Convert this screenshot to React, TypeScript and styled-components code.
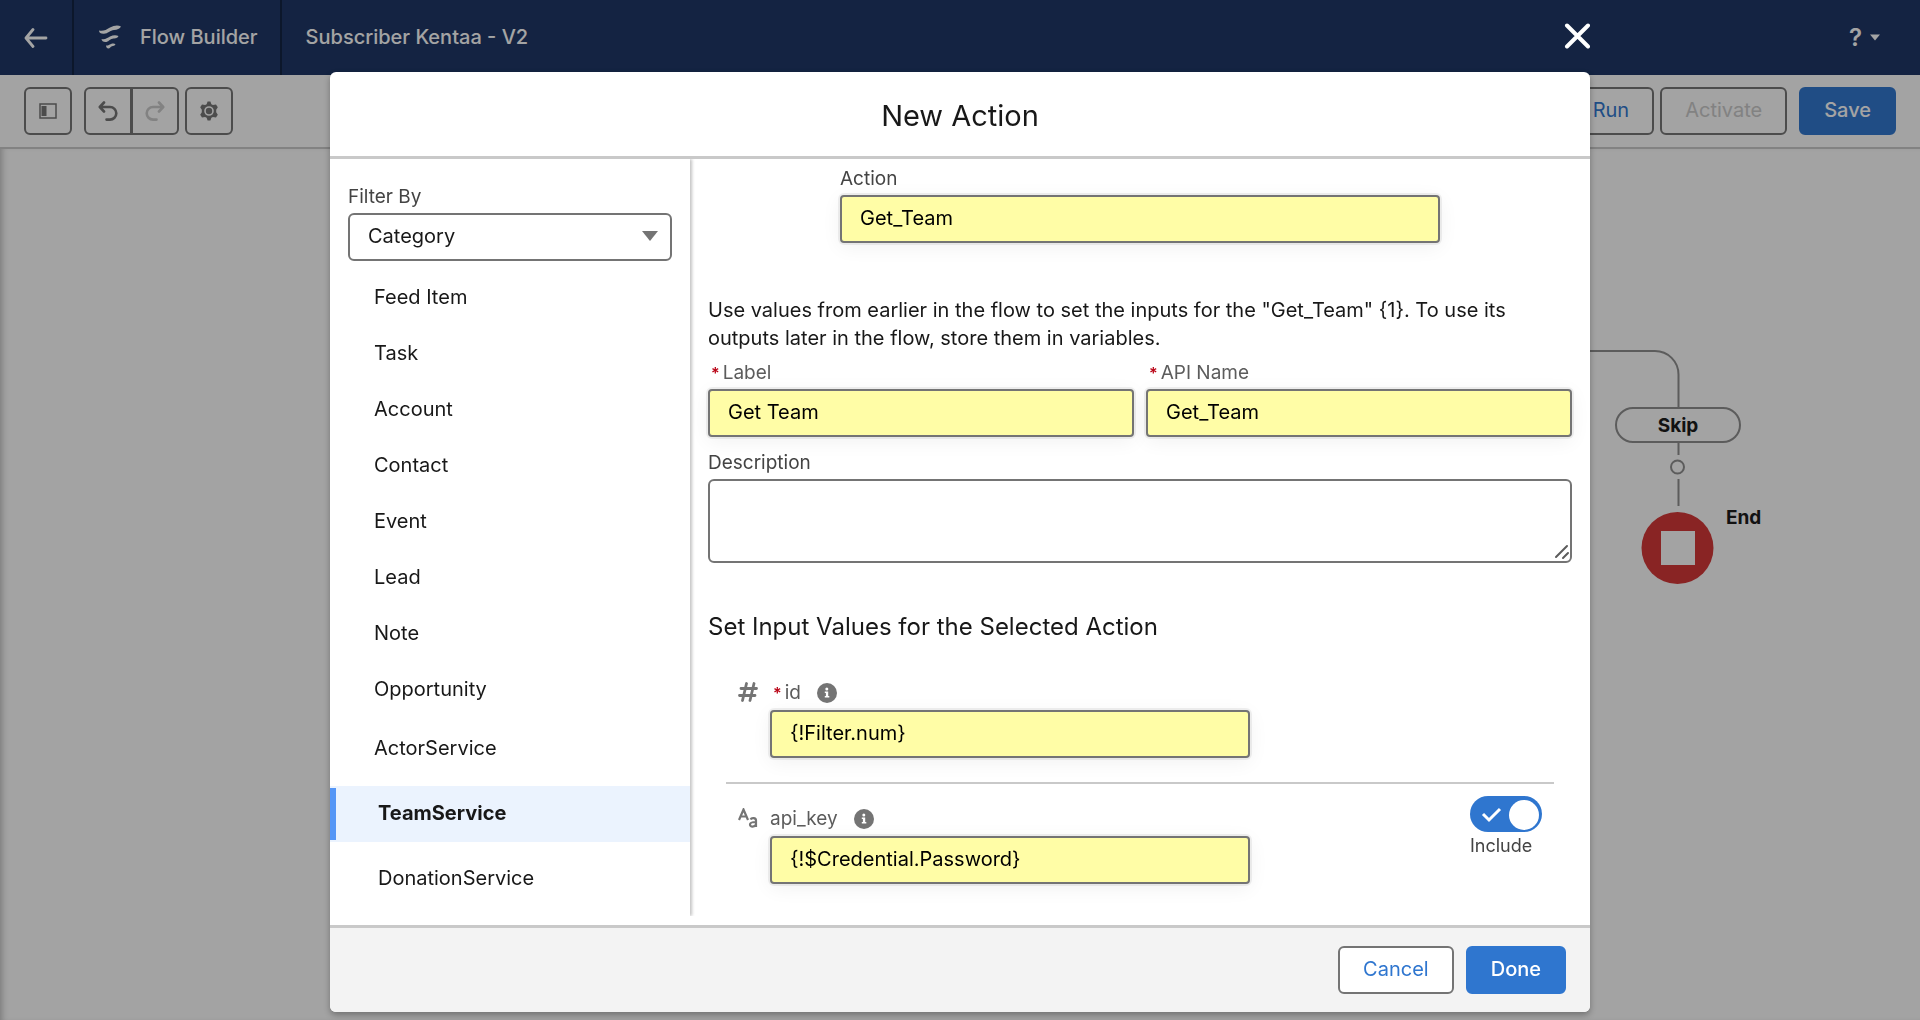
import React from 'react';
import styled, { createGlobalStyle, css } from 'styled-components';

const colors = {
  navy: '#1b3464',
  navyLine: '#0f2040',
  brand: '#2f76cf',
  border: '#747474',
  line: '#c9c9c9',
  text: '#181818',
  label: '#444444',
  weak: '#5c5c5c',
  field: '#fffda6',
  error: '#ba0517',
};

const GlobalStyle = createGlobalStyle`
  *, *::before, *::after { box-sizing: border-box; }
  body {
    margin: 0;
    font-family: Inter, "Liberation Sans", sans-serif;
    font-size: 20px;
    line-height: 28px;
    color: ${colors.text};
  }
  button, input, select, textarea { font: inherit; color: inherit; }
`;

const Page = styled.div`
  display: flex;
  flex-direction: column;
  min-height: 100vh;
  background: #fdfdfd;
`;

/* ---------- builder chrome ---------- */

const TopBar = styled.header`
  display: flex;
  align-items: stretch;
  height: 75px;
  background: ${colors.navy};
  color: #fff;
  font-weight: 500;
`;

const TopCell = styled.div`
  display: flex;
  align-items: center;
  gap: 18px;
  padding: 0 22px 2px 24px;
  border-right: 2px solid ${colors.navyLine};

  &:first-of-type { padding: 0 24px; }
  &:last-of-type { border-right: 0; }
`;

const BackLink = styled.a`
  display: flex;
  color: inherit;
`;

const HelpButton = styled.button`
  display: flex;
  align-items: center;
  gap: 8px;
  margin-left: auto;
  padding: 0 40px 0 24px;
  border: 0;
  background: none;
  font-size: 24px;
  font-weight: 600;
`;

const Toolbar = styled.div`
  display: flex;
  align-items: center;
  justify-content: space-between;
  padding: 12px 24px;
  border-bottom: 2px solid ${colors.line};
`;

const ToolGroup = styled.div<{ $gap: number }>`
  display: flex;
  gap: ${(p) => p.$gap}px;
`;

const buttonBase = css`
  display: flex;
  align-items: center;
  justify-content: center;
  height: 48px;
  border: 2px solid ${colors.border};
  border-radius: 6px;
  background: transparent;
`;

const IconButton = styled.button`
  ${buttonBase}
  width: 48px;
  padding: 0;
  color: ${colors.border};

  &:disabled { color: ${colors.line}; }
`;

const ButtonPair = styled.div`
  display: flex;
  margin-left: 6px;

  ${IconButton}:first-child { border-radius: 6px 0 0 6px; }
  ${IconButton}:last-child { border-radius: 0 6px 6px 0; margin-left: -1px; }
`;

const Button = styled.button<{ $brand?: boolean }>`
  ${buttonBase}
  padding: 0 23px 2px;
  color: ${colors.brand};
  background: #fff;

  &:disabled { color: ${colors.line}; background: transparent; }

  ${(p) =>
    p.$brand &&
    css`
      border-color: ${colors.brand};
      background: ${colors.brand};
      color: #fff;
      font-weight: 500;
    `}
`;

/* ---------- canvas ---------- */

const Canvas = styled.main`
  position: relative;
  flex: 1;
  box-shadow: inset 6px 0 6px -4px rgba(0, 0, 0, 0.25);
`;

const Connectors = styled.svg`
  position: absolute;
  left: 1580px;
  top: 201px;
`;

const BranchPill = styled.div`
  position: absolute;
  left: 1615px;
  top: 258px;
  width: 126px;
  height: 36px;
  border: 2px solid #8e8e8e;
  border-radius: 18px;
  font-size: 19px;
  font-weight: 700;
  line-height: 34px;
  text-align: center;
`;

const EndLabel = styled.div`
  position: absolute;
  left: 1726px;
  top: 355px;
  font-size: 19px;
  font-weight: 700;
`;

/* ---------- modal ---------- */

const Backdrop = styled.div`
  position: fixed;
  inset: 0;
  display: flex;
  flex-direction: column;
  align-items: center;
  background: rgba(8, 7, 7, 0.37);
`;

const ModalColumn = styled.div`
  display: flex;
  flex-direction: column;
  width: 90%;
  max-width: 1260px;
`;

const CloseRow = styled.div`
  display: flex;
  align-items: center;
  justify-content: flex-end;
  height: 72px;
`;

const CloseButton = styled.button`
  display: flex;
  padding: 0;
  border: 0;
  background: none;
  color: #fff;
`;

const Dialog = styled.section`
  overflow: hidden;
  border-radius: 6px;
  background: #fff;
  box-shadow: 0 3px 6px rgba(0, 0, 0, 0.3);
`;

const DialogHeader = styled.header`
  padding: 26px 24px 22px;
  border-bottom: 3px solid ${colors.line};
  text-align: center;
`;

const DialogTitle = styled.h1`
  margin: 0;
  font-size: 29px;
  font-weight: 400;
  line-height: 36px;
`;

const DialogBody = styled.div`
  display: flex;
  align-items: stretch;
  padding-bottom: 9px;
`;

const Sidebar = styled.aside`
  flex: 0 0 360px;
  padding-top: 24px;
  box-shadow: 2px 0 3px rgba(0, 0, 0, 0.24);
  clip-path: inset(0 -8px 0 0);
`;

const Filter = styled.div`
  position: relative;
  display: flex;
  flex-direction: column;
  padding: 0 18px;
`;

const FieldLabel = styled.label<{ $required?: boolean }>`
  display: block;
  padding-bottom: 2px;
  font-size: 19px;
  color: ${(p) => (p.$required ? colors.weak : colors.label)};

  ${(p) =>
    p.$required &&
    css`
      padding-left: 3px;

      &::before {
        content: '*';
        margin-right: 3px;
        font-size: 16px;
        font-weight: 600;
        color: ${colors.error};
      }
    `}
`;

const Select = styled.select`
  appearance: none;
  height: 48px;
  padding: 0 18px 2px;
  border: 2px solid ${colors.border};
  border-radius: 6px;
  background: #fff;
`;

const SelectCaret = styled.svg`
  position: absolute;
  right: 32px;
  bottom: 20px;
  pointer-events: none;
`;

const CategoryList = styled.ul`
  margin: 9px 0 0;
  padding: 0;
  list-style: none;
`;

const CategoryItem = styled.li<{ $custom?: boolean; $selected?: boolean }>`
  margin: ${(p) => (p.$custom ? '3px 0 9px' : '0')};
  background: ${(p) => (p.$selected ? '#ebf3fe' : 'transparent')};
`;

const CategoryButton = styled.button<{ $indent?: boolean; $selected?: boolean }>`
  display: block;
  width: 100%;
  height: 56px;
  padding: 0 0 2px ${(p) => (p.$indent ? 48 : 44)}px;
  border: 0;
  background: ${(p) =>
    p.$selected ? 'linear-gradient(#5596f6, #5596f6) 0 50% / 6px 52px no-repeat' : 'none'};
  font-weight: ${(p) => (p.$selected ? 700 : 400)};
  text-align: left;
`;

const Content = styled.div`
  flex: 1;
  min-width: 0;
  padding: 6px 18px 0;
`;

const ActionField = styled.div`
  width: 600px;
  max-width: 100%;
  margin: 0 auto;
`;

const TextInput = styled.input`
  display: block;
  width: 100%;
  height: 48px;
  padding: 0 18px 2px;
  border: 2px solid ${colors.border};
  border-radius: 4px;
  background: ${colors.field};
  color: #000;
  box-shadow: 0 0 0 2px rgba(0, 0, 0, 0.06), 0 4px 20px rgba(0, 0, 0, 0.06);
`;

const Intro = styled.p`
  margin: 53px 0 7px;
`;

const NameRow = styled.div`
  display: grid;
  grid-template-columns: 1fr 1fr;
  gap: 12px;
  margin-bottom: 12px;
`;

const TextAreaBox = styled.div`
  position: relative;
`;

const TextArea = styled.textarea`
  display: block;
  width: 100%;
  height: 84px;
  padding: 12px 18px;
  border: 2px solid ${colors.border};
  border-radius: 6px;
  background: #fff;
  resize: none;
`;

const ResizeMark = styled.svg`
  position: absolute;
  right: 2px;
  bottom: 3px;
`;

const SectionTitle = styled.h2`
  margin: 46px 0 25px;
  font-size: 24px;
  font-weight: 400;
  line-height: 36px;
`;

const InputRow = styled.div`
  display: flex;
  gap: 12px;
  margin: 0 18px;
  padding: 0 12px 24px;
`;

const DividedRow = styled(InputRow)`
  padding-top: 12px;
  padding-bottom: 29px;
  border-top: 2px solid ${colors.line};
`;

const TypeIcon = styled.div`
  display: flex;
  align-items: center;
  flex: 0 0 20px;
  height: 40px;
  padding-top: 4px;
  color: ${colors.border};
`;

const ValueField = styled.div`
  width: 480px;
`;

const ValueLabel = styled.div`
  display: flex;
  align-items: center;
  gap: 16px;
  height: 40px;
  padding-top: 6px;
  color: ${colors.weak};

  ${FieldLabel} {
    padding-bottom: 0;
    color: inherit;
  }
`;

const IncludeToggle = styled.label`
  display: flex;
  flex-direction: column;
  width: 72px;
  margin-left: auto;
  font-size: 18px;
  line-height: 28px;
  color: ${colors.label};
`;

const ToggleTrack = styled.span`
  position: relative;
  display: block;
  height: 36px;
`;

const ToggleInput = styled.input`
  appearance: none;
  display: block;
  width: 72px;
  height: 36px;
  margin: 0;
  border-radius: 18px;
  background: ${colors.brand};

  &::after {
    content: '';
    display: block;
    width: 30px;
    height: 30px;
    margin: 0 3px 0 auto;
    border-radius: 50%;
    background: #fff;
    transform: translateY(4px);
  }
`;

const ToggleCheck = styled.svg`
  position: absolute;
  left: 11px;
  top: 11px;
  pointer-events: none;
`;

const DialogFooter = styled.footer`
  display: flex;
  justify-content: flex-end;
  gap: 12px;
  padding: 18px 24px;
  border-top: 3px solid ${colors.line};
  background: #f3f3f3;
`;

/* ---------- icons ---------- */

const BackArrow = () => (
  <svg width="24" height="20" viewBox="0 0 24 20" fill="none" stroke="currentColor" strokeWidth="2.800" strokeLinecap="round" strokeLinejoin="round">
    <path d="M22 10H2.500M9 1.500L2 10L9 18.500" />
  </svg>
);

const FlowLogo = () => (
  <svg width="24" height="24" viewBox="0 0 24 24" fill="currentColor">
    <path d="M1 5.500C5 6.500 8 5 12 2.500C16 0.300 20 -0.300 23 1.500C22 4 19 4.600 16 5C12 5.500 10 8.500 6 8.800C3 9 1 7.800 1 5.500Z" />
    <path d="M3.500 14C7 15 9 13 12 11.500C15 10 18 9.800 20.500 11C19.500 13.500 17 13.300 14.500 13.700C11.500 14.200 10.500 17 7.500 17C5 17 3.800 16 3.500 14Z" />
    <path d="M8 20.500C10 21 11 19.600 13 19C15 18.400 16.500 18.500 17.500 19.200C16.800 21 15.200 20.900 14 21.300C12.500 21.800 12 23.500 10.400 23.500C9 23.500 8.200 22.300 8 20.500Z" />
  </svg>
);

const Caret = ({ size }: { size: number }) => (
  <svg width={size} height={size * 0.7} viewBox="0 0 10 7" fill="currentColor">
    <path d="M0 0.500H10L5 6.500Z" />
  </svg>
);

const PanelIcon = () => (
  <svg width="18" height="16" viewBox="0 0 18 16">
    <rect x="1" y="1" width="16" height="14" fill="none" stroke="currentColor" strokeWidth="1.500" />
    <rect x="2.500" y="3" width="5" height="10" fill="currentColor" />
  </svg>
);

const UndoIcon = ({ flip }: { flip?: boolean }) => (
  <svg width="20" height="20" viewBox="0 0 20 20" fill="none" stroke="currentColor" strokeWidth="2.600" strokeLinecap="round" strokeLinejoin="round">
    <g transform={flip ? 'translate(20 0) scale(-1 1)' : undefined}>
      <path d="M6 1.500L1.800 6L6 10.500M2.300 6H12A6.300 6.300 0 0 1 12 18.600H8.500" />
    </g>
  </svg>
);

const GearIcon = () => (
  <svg width="20" height="20" viewBox="0 0 20 20">
    <path
      fill="currentColor"
      fillRule="evenodd"
      d="M8.600 0.500H11.400L12.400 3.200L13.900 4L17 3.400L18.800 6.200L17.200 8.800V11.200L18.800 13.800L17 16.600L13.900 16L12.400 16.800L11.400 19.500H8.600L7.600 16.800L6.100 16L3 16.600L1.200 13.800L2.800 11.200V8.800L1.200 6.200L3 3.400L6.100 4L7.600 3.200ZM10 5.200A4.800 4.800 0 1 0 10 14.800A4.800 4.800 0 1 0 10 5.200Z"
    />
    <circle cx="10" cy="10" r="3.200" fill="currentColor" />
  </svg>
);

const InfoIcon = () => (
  <svg width="20" height="20" viewBox="0 0 20 20">
    <circle cx="10" cy="10" r="10" fill={colors.border} />
    <circle cx="9.800" cy="6" r="1.500" fill="#fff" />
    <path d="M7.800 8.500H11.200V13H12.300V14.500H7.800V13H8.900V10H7.800Z" fill="#fff" />
  </svg>
);

const HashIcon = () => (
  <svg width="20" height="20" viewBox="0 0 20 20" fill="none" stroke="currentColor" strokeWidth="2.800" strokeLinecap="round">
    <path d="M8.500 1.500L4.500 18.500M16 1.500L12 18.500M3 6.500H18.500M1.500 13.500H17" />
  </svg>
);

const LetterCaseIcon = () => (
  <svg width="20" height="20" viewBox="0 0 20 20" fill="none" stroke="currentColor" strokeWidth="2.200">
    <path d="M1 12L5.500 1.500L10 12M2.700 8.500H8.300" />
    <path d="M12.500 11.500C13.500 9.500 18 9.500 18 12.500V19M18 14C14 14 12 14.800 12 16.500C12 19.500 17 19 18 16.500" />
  </svg>
);

/* ---------- data ---------- */

const categories = [
  { name: 'Feed Item' },
  { name: 'Task' },
  { name: 'Account' },
  { name: 'Contact' },
  { name: 'Event' },
  { name: 'Lead' },
  { name: 'Note' },
  { name: 'Opportunity' },
  { name: 'ActorService', custom: true },
  { name: 'TeamService', custom: true, indent: true, selected: true },
  { name: 'DonationService', custom: true, indent: true },
];

const introText =
  'Use values from earlier in the flow to set the inputs for the "Get_Team" {1}. To use its outputs later in the flow, store them in variables.';

export default function App() {
  return (
    <>
      <GlobalStyle />
      <Page>
        <TopBar>
          <TopCell>
            <BackLink href="#" aria-label="Back">
              <BackArrow />
            </BackLink>
          </TopCell>
          <TopCell>
            <FlowLogo />
            Flow Builder
          </TopCell>
          <TopCell>Subscriber Kentaa - V2</TopCell>
          <HelpButton type="button" aria-label="Help">
            ?<Caret size={10} />
          </HelpButton>
        </TopBar>
        <Toolbar>
          <ToolGroup $gap={6}>
            <IconButton type="button" aria-label="Toggle toolbox">
              <PanelIcon />
            </IconButton>
            <ButtonPair>
              <IconButton type="button" aria-label="Undo">
                <UndoIcon />
              </IconButton>
              <IconButton type="button" aria-label="Redo" disabled>
                <UndoIcon flip />
              </IconButton>
            </ButtonPair>
            <IconButton type="button" aria-label="Settings">
              <GearIcon />
            </IconButton>
          </ToolGroup>
          <ToolGroup $gap={12}>
            <ToolGroup $gap={6}>
              <Button type="button">Run</Button>
              <Button type="button" disabled>
                Activate
              </Button>
            </ToolGroup>
            <Button type="button" $brand>
              Save
            </Button>
          </ToolGroup>
        </Toolbar>
        <Canvas>
          <Connectors width="150" height="240" viewBox="0 0 150 240" fill="none" stroke="#8e8e8e" strokeWidth="2">
            <path d="M0 1H75A23.500 23.500 0 0 1 98.500 24.500V57" />
            <path d="M98.500 93V105M98.500 129V156" />
            <circle cx="97.500" cy="117" r="6.500" />
            <circle cx="97.500" cy="198" r="36" fill="#d43535" stroke="none" />
            <rect x="81" y="181" width="34" height="34" fill="#fdfdfd" stroke="none" />
          </Connectors>
          <BranchPill>Skip</BranchPill>
          <EndLabel>End</EndLabel>
        </Canvas>
      </Page>

      <Backdrop>
        <ModalColumn>
          <CloseRow>
            <CloseButton type="button" aria-label="Close">
              <svg width="26" height="26" viewBox="0 0 26 26" fill="none" stroke="currentColor" strokeWidth="4" strokeLinecap="round">
                <path d="M3 2.500L24 23.500M24 2.500L3 23.500" />
              </svg>
            </CloseButton>
          </CloseRow>
          <Dialog role="dialog" aria-labelledby="dialog-title">
            <DialogHeader>
              <DialogTitle id="dialog-title">New Action</DialogTitle>
            </DialogHeader>
            <DialogBody>
              <Sidebar>
                <Filter>
                  <FieldLabel htmlFor="filter">Filter By</FieldLabel>
                  <Select id="filter" defaultValue="Category">
                    <option>Category</option>
                  </Select>
                  <SelectCaret width="16" height="10" viewBox="0 0 16 10" fill={colors.border}>
                    <path d="M0 0H16L8 10Z" />
                  </SelectCaret>
                </Filter>
                <CategoryList>
                  {categories.map((c) => (
                    <CategoryItem key={c.name} $custom={c.custom} $selected={c.selected}>
                      <CategoryButton type="button" $indent={c.indent} $selected={c.selected}>
                        {c.name}
                      </CategoryButton>
                    </CategoryItem>
                  ))}
                </CategoryList>
              </Sidebar>
              <Content>
                <ActionField>
                  <FieldLabel htmlFor="action">Action</FieldLabel>
                  <TextInput id="action" defaultValue="Get_Team" />
                </ActionField>
                <Intro>{introText}</Intro>
                <NameRow>
                  <div>
                    <FieldLabel htmlFor="label" $required>
                      Label
                    </FieldLabel>
                    <TextInput id="label" defaultValue="Get Team" />
                  </div>
                  <div>
                    <FieldLabel htmlFor="api-name" $required>
                      API Name
                    </FieldLabel>
                    <TextInput id="api-name" defaultValue="Get_Team" />
                  </div>
                </NameRow>
                <FieldLabel htmlFor="description">Description</FieldLabel>
                <TextAreaBox>
                  <TextArea id="description" />
                  <ResizeMark width="16" height="16" viewBox="0 0 16 16" fill="none" stroke={colors.weak} strokeWidth="2" strokeLinecap="round">
                    <path d="M2 13L13 2M9 14L14 9" />
                  </ResizeMark>
                </TextAreaBox>
                <SectionTitle>Set Input Values for the Selected Action</SectionTitle>
                <InputRow>
                  <TypeIcon>
                    <HashIcon />
                  </TypeIcon>
                  <ValueField>
                    <ValueLabel>
                      <FieldLabel htmlFor="id-value" $required>
                        id
                      </FieldLabel>
                      <InfoIcon />
                    </ValueLabel>
                    <TextInput id="id-value" defaultValue="{!Filter.num}" />
                  </ValueField>
                </InputRow>
                <DividedRow>
                  <TypeIcon>
                    <LetterCaseIcon />
                  </TypeIcon>
                  <ValueField>
                    <ValueLabel>
                      <FieldLabel htmlFor="api-key">api_key</FieldLabel>
                      <InfoIcon />
                    </ValueLabel>
                    <TextInput id="api-key" defaultValue="{!$Credential.Password}" />
                  </ValueField>
                  <IncludeToggle>
                    <ToggleTrack>
                      <ToggleInput type="checkbox" defaultChecked />
                      <ToggleCheck width="21" height="16" viewBox="0 0 21 16" fill="none" stroke="#fff" strokeWidth="3">
                        <path d="M2 7L8 13L19 2" />
                      </ToggleCheck>
                    </ToggleTrack>
                    Include
                  </IncludeToggle>
                </DividedRow>
              </Content>
            </DialogBody>
            <DialogFooter>
              <Button type="button">Cancel</Button>
              <Button type="button" $brand>
                Done
              </Button>
            </DialogFooter>
          </Dialog>
        </ModalColumn>
      </Backdrop>
    </>
  );
}
